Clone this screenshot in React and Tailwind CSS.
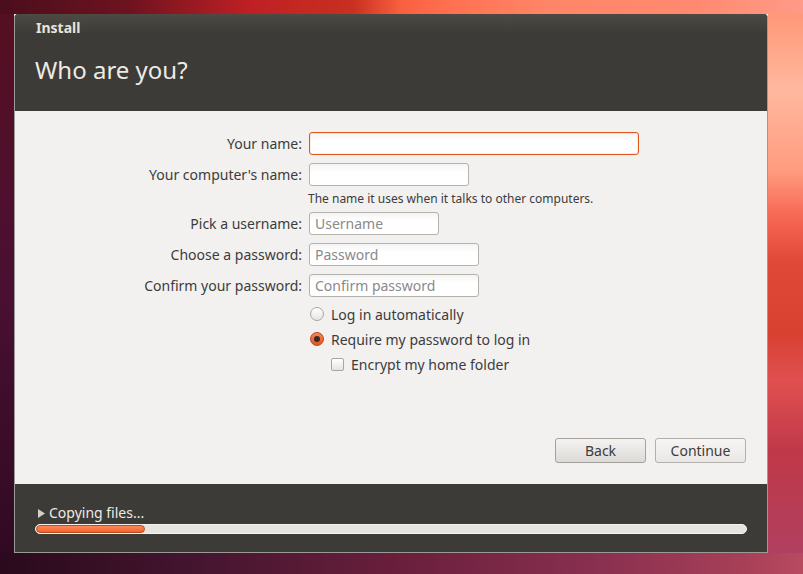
export default function App() {
  const font = { fontFamily: '"Noto Sans", "Open Sans", sans-serif' };
  const label = "w-[294px] shrink-0 text-right pr-[7px] text-[14px] text-[#3c3c3c] leading-none";
  const input =
    "h-[23px] rounded-[3px] border border-[#b5b2ac] bg-[linear-gradient(#f4f4f4,#ffffff_40%)] px-[5px] text-[14px] text-[#8a8a8a] flex items-center";
  return (
    <div className="w-[803px] h-[574px] overflow-hidden flex flex-col" style={font}>
      {/* top strip of wallpaper */}
      <div className="h-[14px] shrink-0 bg-[linear-gradient(to_right,#4a0e1c_0%,#6e1220_16%,#be2024_31%,#c83020_44%,#fa6040_50%,#ff7050_56%,#ff8568_68%,#ff8a70_87%,#ff9a88_100%)]"></div>
      <div className="flex h-[539px] shrink-0">
        {/* left strip */}
        <div className="w-[14px] shrink-0 bg-[linear-gradient(#560f22,#4a1032_50%,#300a22)]"></div>
        {/* window */}
        <div className="w-[754px] shrink-0 flex flex-col rounded-t-[4px] overflow-hidden border-x border-b border-[#9c9a96] bg-[#3c3b37]">
          {/* header */}
          <div className="h-[97px] shrink-0 flex flex-col bg-[linear-gradient(#4d4a44_0px,#3c3b37_20px,#3c3b37)]">
            <div className="h-[27px] flex items-center pl-[21px] text-[14px] font-bold text-[#e6e3dc]">Install</div>
            <div className="pl-[20px] pt-[17px] text-[24px] text-[#eeeae4] leading-none">Who are you?</div>
          </div>
          {/* body */}
          <div className="flex-1 bg-[#f2f1f0] flex flex-col pt-[21px]">
            <div className="flex items-center h-[23px]">
              <div className={label}>Your name:</div>
              <div className="h-[23px] w-[330px] rounded-[3px] border border-[#e0571e] bg-[linear-gradient(#f6f6f6,#ffffff_40%)] shadow-[inset_0_0_0_1px_rgba(240,120,60,0.15)]"></div>
            </div>
            <div className="flex items-center h-[23px] mt-[8px]">
              <div className={label}>Your computer's name:</div>
              <div className={input + " w-[160px]"}></div>
            </div>
            <div className="flex h-[26px] items-center">
              <div className="w-[293px] shrink-0"></div>
              <div className="text-[12px] text-[#3c3c3c] leading-none">The name it uses when it talks to other computers.</div>
            </div>
            <div className="flex items-center h-[23px]">
              <div className={label}>Pick a username:</div>
              <div className={input + " w-[130px]"}>Username</div>
            </div>
            <div className="flex items-center h-[23px] mt-[8px]">
              <div className={label}>Choose a password:</div>
              <div className={input + " w-[170px]"}>Password</div>
            </div>
            <div className="flex items-center h-[23px] mt-[8px]">
              <div className={label}>Confirm your password:</div>
              <div className={input + " w-[170px]"}>Confirm password</div>
            </div>
            <div className="flex items-center h-[20px] mt-[7px] pl-[295px] gap-[7px]">
              <div className="w-[14px] h-[14px] rounded-full border border-[#a9a6a0] bg-[linear-gradient(#ffffff,#e6e4e1)]"></div>
              <div className="text-[14px] text-[#3c3c3c]">Log in automatically</div>
            </div>
            <div className="flex items-center h-[20px] mt-[5px] pl-[295px] gap-[7px]">
              <div className="w-[14px] h-[14px] rounded-full border border-[#b8461a] bg-[linear-gradient(#f8845a,#e2551f)] flex items-center justify-center">
                <div className="w-[6px] h-[6px] rounded-full bg-[#3a2a24]"></div>
              </div>
              <div className="text-[14px] text-[#3c3c3c]">Require my password to log in</div>
            </div>
            <div className="flex items-center h-[20px] mt-[5px] pl-[316px] gap-[7px]">
              <div className="w-[13px] h-[13px] rounded-[2px] border border-[#a9a6a0] bg-[linear-gradient(#ffffff,#e6e4e1)]"></div>
              <div className="text-[14px] text-[#3c3c3c]">Encrypt my home folder</div>
            </div>
            <div className="flex-1"></div>
            <div className="flex justify-end gap-[9px] pr-[21px] pb-[21px]">
              <div className="w-[91px] h-[25px] rounded-[3px] border border-[#a5a29d] bg-[linear-gradient(#f4f3f2,#dcdad7)] flex items-center justify-center text-[14px] text-[#3c3c3c]">Back</div>
              <div className="w-[91px] h-[25px] rounded-[3px] border border-[#b3b0ab] bg-[linear-gradient(#f6f5f4,#eae8e6)] flex items-center justify-center text-[14px] text-[#3c3c3c]">Continue</div>
            </div>
          </div>
          {/* footer */}
          <div className="h-[68px] shrink-0 bg-[#3c3b37] flex flex-col pl-[20px] pr-[21px] pt-[20px]">
            <div className="flex items-center h-[18px] text-[14px] text-[#eeeae4] leading-none">
              <svg width="8" height="9" viewBox="0 0 8 9" className="ml-[3px] mr-[3px]">
                <polygon points="0,0 7,4.5 0,9" fill="#d4d0c8" />
              </svg>
              <span>Copying files...</span>
            </div>
            <div className="mt-[2px] h-[10px] w-[712px] rounded-full bg-[#e6e4e1] border border-[#f4f3f1] overflow-hidden">
              <div className="h-full w-[109px] rounded-full bg-[linear-gradient(#ff8a5a,#f0622a)] border border-[#b84a1e]"></div>
            </div>
          </div>
        </div>
        {/* right strip */}
        <div className="flex-1 bg-[linear-gradient(#ff9878_0%,#ffb89e_14%,#ff9c80_29%,#f86a55_37%,#e04838_46%,#d84030_59%,#e05050_68%,#c03848_81%,#b04060_100%)]"></div>
      </div>
      {/* bottom strip */}
      <div className="flex-1 bg-[linear-gradient(to_right,#2a0a1c_0%,#45152f_25%,#6a1f3c_50%,#8a3050_75%,#a84058_93%,#b84a60_100%)]"></div>
    </div>
  );
}
